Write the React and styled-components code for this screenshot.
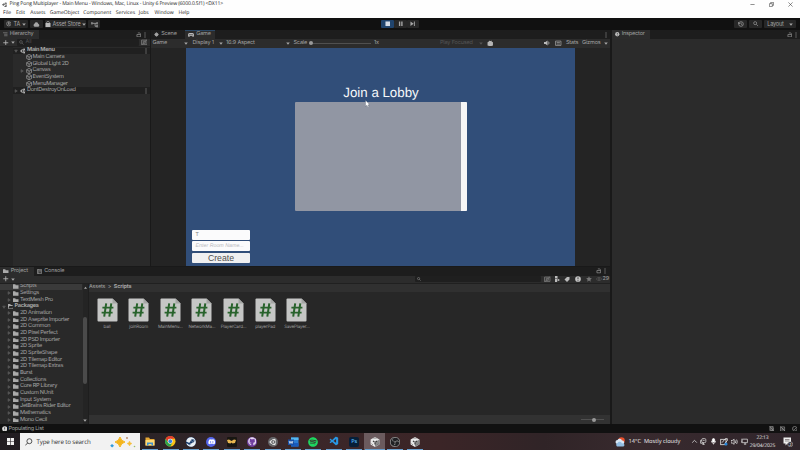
import React from "react";
import styled, { createGlobalStyle, css } from "styled-components";
import { FaSteam, FaDiscord, FaSpotify, FaGithub, FaUnity } from "react-icons/fa";
import { SiObsstudio } from "react-icons/si";
import { VscVscode } from "react-icons/vsc";

const GlobalStyle = createGlobalStyle`
  * { box-sizing: border-box; }
  body { margin: 0; background: #111; overflow: hidden; text-rendering: geometricPrecision; }
  svg { display: block; flex: none; }
`;

const Screen = styled.div`
  width: 800px;
  height: 450px;
  display: flex;
  flex-direction: column;
  overflow: hidden;
  font-family: Inter, sans-serif;
  font-size: 5.5px;
  letter-spacing: -0.16px;
  line-height: 1.2;
  color: #a2a2a2;
  white-space: nowrap;
`;

/* ---------- window chrome ---------- */
const WindowHeader = styled.header`
  height: 18px;
  flex: none;
  background: #fefefe;
  color: #222;
  font-family: "Open Sans", "Noto Sans", sans-serif;
  font-size: 5.1px;
  letter-spacing: 0;
`;
const TitleBar = styled.div`
  height: 9px;
  padding: 0 7px 0 2px;
  display: flex;
  align-items: center;
  gap: 2px;
`;
const WindowTitle = styled.span`
  flex: 1;
  font-size: 5.1px;
  letter-spacing: -0.14px;
`;
const WindowControls = styled.div`
  display: flex;
  gap: 14px;
`;
const MenuBar = styled.nav`
  height: 9px;
  padding-left: 3px;
  display: flex;
  align-items: center;
`;
const MenuItem = styled.span`
  width: ${(p) => p.$width}px;
`;

/* ---------- editor toolbar ---------- */
const Toolbar = styled.div`
  height: 12px;
  flex: none;
  display: flex;
  align-items: center;
  justify-content: space-between;
  background: #111;
  padding: 0 4px;
`;
const ToolGroup = styled.div`
  flex: 1;
  display: flex;
  gap: 2px;
  justify-content: ${(p) => p.$justify || "flex-start"};
`;
const ToolButton = styled.button`
  width: ${(p) => p.$width}px;
  height: 8px;
  padding: 0 2px;
  border: 0;
  border-radius: 1px;
  background: ${(p) => (p.$active ? "#20446d" : "#272727")};
  color: #a6a6a6;
  font: inherit;
  letter-spacing: inherit;
  display: flex;
  align-items: center;
  justify-content: center;
  gap: ${(p) => p.$gap || 1}px;
`;

/* ---------- panels ---------- */
const Workspace = styled.div`
  height: 394px;
  flex: none;
  display: grid;
  grid-template-columns: 610px 188px;
  gap: 2px;
  background: #191919;
`;
const MainArea = styled.div`
  display: grid;
  grid-template-rows: 235.5px 157.5px;
  row-gap: 1px;
`;
const UpperArea = styled.div`
  display: grid;
  grid-template-columns: 150px 459px;
  column-gap: 1px;
`;
const Panel = styled.section`
  display: flex;
  flex-direction: column;
  overflow: hidden;
  background: ${(p) => p.$bg || "#292929"};
`;
const TabBar = styled.div`
  height: 9px;
  flex: none;
  display: flex;
  background: #1d1d1d;
`;
const Tab = styled.div`
  width: ${(p) => p.$width}px;
  padding-left: 3px;
  display: flex;
  align-items: center;
  gap: 2.2px;
  color: #a0a0a0;
  ${(p) => p.$active && css`background: #2c2c2c;`}
  ${(p) => p.$focus && css`box-shadow: inset 0 0.8px #2b5179;`}
`;
const TabActions = styled.div`
  margin-left: auto;
  padding-right: ${(p) => p.$right ?? 3}px;
  display: flex;
  align-items: center;
  gap: 3px;
`;
const Strip = styled.div`
  height: ${(p) => p.$height || 8}px;
  flex: none;
  display: flex;
  align-items: center;
  gap: 2px;
  background: #2c2c2c;
  border-bottom: 1px solid #202020;
  padding: 0 ${(p) => p.$right ?? 3}px 0 3px;
`;
const SearchField = styled.div`
  width: ${(p) => p.$width}px;
  height: 6.4px;
  padding-left: 2px;
  display: flex;
  align-items: center;
  gap: 2px;
  border-radius: 1px;
  background: #1f1f1f;
  color: #4e4e4e;
`;

const TreeRow = styled.div`
  height: 6.67px;
  flex: none;
  display: flex;
  align-items: center;
  padding-left: ${(p) => p.$indent}px;
  font-size: 5.6px;
  letter-spacing: -0.3px;
  font-weight: ${(p) => (p.$bold ? 700 : 400)};
  color: #a6a6a6;
  background: ${(p) => (p.$selected ? "#3a3a3a" : p.$root ? "#202020" : "transparent")};
`;
const ArrowSlot = styled.span`
  width: 6px;
  flex: none;
  display: flex;
`;
const IconSlot = styled.span`
  width: ${(p) => p.$width || 7}px;
  flex: none;
  display: flex;
`;
const TreeEnd = styled.span`
  margin-left: auto;
  padding-right: 3.5px;
`;
const HierarchyBody = styled.div`
  flex: 1;
  display: grid;
  grid-template-columns: 13px 1fr;
  background: linear-gradient(90deg, #242424 13px, #2a2a2a 13px);
`;
const HierarchyRows = styled.div`
  grid-column: 2;
  padding-top: 0.5px;
`;

/* ---------- game view ---------- */
const GameStrip = styled.div`
  height: 8.5px;
  flex: none;
  display: flex;
  align-items: center;
  padding-left: 1.5px;
  background: #2c2c2c;
`;
const StripCell = styled.span`
  width: ${(p) => p.$width}px;
  flex: none;
  padding-right: ${(p) => p.$right || 0}px;
  display: flex;
  align-items: center;
  color: ${(p) => (p.$dim ? "#555" : "#a2a2a2")};
`;
const CellLabel = styled.span`
  flex: 1;
`;
const SliderTrack = styled.span`
  width: ${(p) => p.$width}px;
  height: 1px;
  background: #505050;
  display: flex;
  align-items: center;
  padding-left: ${(p) => p.$offset || 0}px;
`;
const SliderThumb = styled.i`
  width: 4px;
  height: 4px;
  flex: none;
  border-radius: 50%;
  background: #999;
`;
const Letterbox = styled.div`
  flex: 1;
  display: flex;
  padding: 0 35px;
  background: #242424;
`;
const GameCanvas = styled.div`
  flex: 1;
  position: relative;
  display: flex;
  flex-direction: column;
  padding-left: 6px;
  background: #314e79;
  font-family: "Liberation Sans", sans-serif;
  letter-spacing: 0;
`;
const LobbyTitle = styled.h1`
  width: 378px;
  height: 18px;
  margin: 36.5px 0 0;
  font-size: 13.3px;
  line-height: 18px;
  font-weight: 400;
  text-align: center;
  color: #f6f8fa;
`;
const LobbyList = styled.div`
  width: 172.5px;
  height: 109px;
  margin-left: 102.5px;
  border-radius: 1px;
  background: #9196a3;
  display: flex;
  justify-content: flex-end;
  overflow: hidden;
`;
const LobbyScrollbar = styled.div`
  width: 6.5px;
  background: #f6f6f6;
`;
const RoomForm = styled.div`
  width: 58px;
  margin-top: 19px;
  display: flex;
  flex-direction: column;
  gap: 1.3px;
`;
const RoomField = styled.div`
  height: 10.1px;
  padding-left: 3.5px;
  border-radius: 1px;
  background: #fbfbfc;
  color: ${(p) => (p.$placeholder ? "#b9b9be" : "#777")};
  font-size: 5.3px;
  font-style: ${(p) => (p.$placeholder ? "italic" : "normal")};
  line-height: 10.2px;
`;
const CreateButton = styled.button`
  height: 10.2px;
  padding: 0;
  border: 0;
  border-radius: 1px;
  background: #f0f0f1;
  color: #505050;
  font: 8.7px/10.5px "Liberation Sans", sans-serif;
`;
const Cursor = styled.svg`
  position: absolute;
  left: 178.5px;
  top: 52px;
`;

/* ---------- project panel ---------- */
const ProjectBody = styled.div`
  flex: 1;
  min-height: 0;
  display: grid;
  grid-template-columns: 82px 5px 522px;
  column-gap: 0.5px;
`;
const FolderTree = styled.div`
  overflow: hidden;
`;
const ScrollRail = styled.div`
  display: flex;
  flex-direction: column;
  align-items: center;
  padding: 2px 0;
  background: #242424;
`;
const ScrollThumb = styled.div`
  width: 4px;
  height: 67px;
  margin: 28px 0 auto;
  border-radius: 2px;
  background: #4b4b4b;
`;
const Browser = styled.div`
  display: flex;
  flex-direction: column;
  background: #272727;
  border-left: 1px solid #1e1e1e;
`;
const Breadcrumb = styled.div`
  height: 8px;
  flex: none;
  display: flex;
  align-items: center;
  gap: 2.6px;
  background: #303030;
  font-size: 5.4px;
`;
const FileGrid = styled.div`
  flex: 1;
  display: flex;
  padding: 6px 0 0 2.2px;
`;
const FileItem = styled.div`
  width: 31.65px;
  display: flex;
  flex-direction: column;
  align-items: center;
  gap: 3px;
  font-size: 4.5px;
  letter-spacing: -0.14px;
  color: #9c9c9c;
`;
const BrowserFooter = styled.div`
  height: 9px;
  display: flex;
  align-items: center;
  justify-content: flex-end;
  padding-right: 6px;
  background: #323232;
`;
const StatusBar = styled.footer`
  height: 9px;
  flex: none;
  display: flex;
  align-items: center;
  gap: 6px;
  padding: 0 3px 0 1.5px;
  background: #111;
`;
const StatusText = styled.span`
  flex: 1;
  margin-left: -4.5px;
  padding-top: 1px;
  letter-spacing: -0.22px;
`;

/* ---------- desktop taskbar ---------- */
const Taskbar = styled.div`
  height: 17px;
  flex: none;
  display: flex;
  align-items: stretch;
  background: linear-gradient(90deg, #211d21 0, #2a2327 18%, #3b2729 37%, #3b2527 55%, #302427 68%, #382a2e 80%, #30252b 100%);
  color: #eee;
  font-family: "Open Sans", "Noto Sans", sans-serif;
  letter-spacing: 0;
`;
const StartButton = styled.div`
  width: 20px;
  display: grid;
  place-items: center;
`;
const TaskSearch = styled.div`
  width: 120px;
  display: flex;
  align-items: center;
  gap: 4px;
  padding: 0 2px 0 5px;
  background: #f2f2f2;
  color: #333;
  font-size: 6.2px;
  letter-spacing: -0.15px;
`;
const SearchPrompt = styled.span`
  flex: 1;
  padding-top: 1px;
`;
const AppButton = styled.div`
  width: 20.42px;
  display: grid;
  place-items: center;
  background:
    linear-gradient(#69a3d2, #69a3d2) center bottom / ${(p) => (p.$active ? 20 : 16)}px 1px no-repeat,
    ${(p) => (p.$active ? "#6b5b5e" : "transparent")};
  color: ${(p) => p.$color || "#fff"};
`;
const AppBadge = styled.span`
  width: 10px;
  height: 10px;
  display: grid;
  place-items: center;
  border-radius: ${(p) => p.$radius || "50%"};
  background: ${(p) => p.$bg};
  font-size: 5.5px;
  font-weight: 600;
`;
const Weather = styled.div`
  margin-left: auto;
  width: 75.5px;
  display: flex;
  align-items: center;
  font-size: 5.7px;
`;
const WeatherIcon = styled.span`
  width: 13.5px;
`;
const Temperature = styled.span`
  width: 15.5px;
`;
const Tray = styled.div`
  width: 58.5px;
  display: flex;
  align-items: center;
  gap: 2.8px;
`;
const Clock = styled.div`
  width: 27px;
  padding-top: 0.5px;
  text-align: center;
  font-size: 5px;
  line-height: 8px;
  letter-spacing: -0.1px;
`;
const Notifications = styled.div`
  width: 24px;
  display: grid;
  place-items: center;
`;

/* ---------- drawings ---------- */
const Glyph = ({ size = 6, children, color = "#a6a6a6", filled }) => (
  <svg width={size} height={size} viewBox="0 0 12 12" fill={filled ? color : "none"} stroke={filled ? "none" : color} strokeWidth="1.3" color={color}>
    {children}
  </svg>
);
const Caret = ({ color = "#a6a6a6" }) => (
  <svg width="4" height="3" viewBox="0 0 4 3"><path d="M.2.5h3.600L2 2.700z" fill={color} /></svg>
);
const TreeArrow = ({ open }) => (
  <svg width="4" height="4" viewBox="0 0 4 4">
    <path d={open ? "M.6 1h2.8L2 3.4z" : "M1 .6v2.8L3.4 2z"} fill="#494949" stroke="#707070" strokeWidth=".4" />
  </svg>
);
const Kebab = () => (
  <svg width="2" height="6" viewBox="0 0 2 6" fill="#999"><rect x=".5" y=".5" width="1" height="1" /><rect x=".5" y="2.5" width="1" height="1" /><rect x=".5" y="4.5" width="1" height="1" /></svg>
);
const Lock = () => (
  <Glyph size={5.5}><path d="M2 5.5h8v5H2zM4 2h3.5a2 2 0 0 1 2 2v1.5" /></Glyph>
);
const Cube = () => (
  <Glyph size={6.2}><path d="M6 .8l4.7 2.5v5.4L6 11.2 1.3 8.7V3.3zM1.3 3.3L6 6l4.7-2.7M6 6v5.2" /></Glyph>
);
const Folder = ({ open }) => (
  <svg width="5.5" height="4.7" viewBox="0 0 12 10" fill="#aaa">
    {open ? <path d="M0 0h5l1 2h4v2H3L1 9h9l2-5v6H0z" /> : <path d="M0 .5h5l1 2h6V10H0z" />}
  </svg>
);
const Magnifier = ({ size = 5, color }) => (
  <Glyph size={size} color={color}><circle cx="4.7" cy="4.7" r="3.3" /><path d="M7.3 7.3l3.7 3.7" /></Glyph>
);
const Plus = () => (
  <Glyph size={5.5} color="#bbb"><path d="M6 .5v11M.5 6h11" strokeWidth="1.8" /></Glyph>
);
const Gear = () => (
  <Glyph size={5}><circle cx="6" cy="6" r="3.7" fill="currentColor" /><path d="M6 .5v11M.5 6h11M2.200 2.200l7.600 7.600M9.800 2.200l-7.600 7.600" /></Glyph>
);
const Info = ({ size = 5.5, color = "#c4c4c4" }) => (
  <Glyph size={size} color={color} filled><circle cx="6" cy="6" r="5.7" /><path d="M5.2 2.5h1.6v4H5.2zM5.2 7.8h1.6v1.6H5.2z" fill="#282828" /></Glyph>
);
const SavedSearch = () => (
  <Glyph size={6.5} color="#858585"><path d="M1 2h10v8H1zM1 11L11 1M4 4h4v4H4z" /></Glyph>
);
const ScriptFile = () => (
  <svg width="21" height="24" viewBox="0 0 21 25" preserveAspectRatio="none">
    <path d="M1.5.5h14l5 5.2v17.8q0 1-1 1h-18q-1 0-1-1v-22q0-1 1-1z" fill="#c5c6c5" />
    <path d="M15.5.5v5.2h5z" fill="#a4a5a4" />
    <path d="M9.2 5.7L7.2 19.5M14.3 5.7l-2 13.8M5.4 10h11M4.6 15.2h11" fill="none" stroke="#28632c" strokeWidth="2" />
  </svg>
);
const UnityMark = () => (
  <svg width="10" height="10" viewBox="0 0 20 20">
    <path d="M10 0l8.8 5v10L10 20 1.2 15V5z" fill="#e8e8e8" />
    <path d="M10 10l8.8-5v10L10 20z" fill="#8a8a8a" />
    <path d="M10 11v4M9 10L6 8M11 10l3-2" stroke="#3a3a3a" strokeWidth="2.4" fill="none" />
    <path d="M3 13l3 3M17 13l-3 3M7 3l3-1 3 1" stroke="#666" strokeWidth="1.2" fill="none" />
  </svg>
);
const Explorer = () => (
  <svg width="10" height="9" viewBox="0 0 20 18"><path d="M1 1h7l2 3h9v13H1z" fill="#e5a835" /><path d="M1 6h18v11H1z" fill="#ffda75" /><path d="M4 11h12v6h-3v-3H7v3H4z" fill="#3e91d0" /></svg>
);
const Chrome = () => (
  <svg width="10.5" height="10.5" viewBox="0 0 20 20">
    <circle cx="10" cy="10" r="10" fill="#fbc116" />
    <path d="M1.3 5A10 10 0 0 1 18.7 5H10a5 5 0 0 0-4.3 7.5z" fill="#e33b2e" />
    <path d="M1.3 5A10 10 0 0 0 10 20l4.3-7.5a5 5 0 0 1-8.6 0z" fill="#2da04d" />
    <circle cx="10" cy="10" r="4.6" fill="#fff" /><circle cx="10" cy="10" r="3.6" fill="#397fe3" />
  </svg>
);
const Word = () => (
  <svg width="11" height="10" viewBox="0 0 22 20"><path d="M6 1h15v18H6z" fill="#2b7cd3" /><path d="M6 1h15v5H6z" fill="#55b6ee" /><path d="M6 12h15v7H6z" fill="#185abd" /><path d="M0 5h12v11H0z" fill="#174fa5" /><path d="M2.3 8l1.6 5L6 8.5 8.1 13l1.6-5" stroke="#fff" strokeWidth="1.4" fill="none" /></svg>
);
const Sparkles = () => (
  <svg width="28" height="12" viewBox="0 0 28 12">
    <path d="M10 1q1 4 5 5-4 1-5 5-1-4-5-5 4-1 5-5z" fill="#f4b51d" stroke="#f4b51d" strokeWidth="1" strokeLinejoin="round" />
    <path d="M19.500 5q.5 2 2.500 2.500Q20 8 19.500 10q-.5-2-2.500-2.500Q19 7 19.500 5z" fill="#f5bd38" stroke="#f5bd38" strokeWidth=".4" />
    <path d="M2 8L4 9.800 2.100 11.500.2 9.800z" fill="#319bdc" />
    <circle cx="17" cy="2" r=".9" fill="#b98464" /><circle cx="24.500" cy="10.500" r=".8" fill="#9abc68" />
  </svg>
);

const menus = [["File", 13], ["Edit", 14.3], ["Assets", 19.4], ["GameObject", 33.5], ["Component", 32.6], ["Services", 23], ["Jobs", 15.7], ["Window", 24], ["Help", 15]];
const sceneObjects = [["Main Camera"], ["Global Light 2D"], ["Canvas", true], ["EventSystem"], ["MenuManager"]];
const packages = ["2D Animation", "2D Aseprite Importer", "2D Common", "2D Pixel Perfect", "2D PSD Importer", "2D Sprite", "2D SpriteShape", "2D Tilemap Editor", "2D Tilemap Extras", "Burst", "Collections", "Core RP Library", "Custom NUnit", "Input System", "JetBrains Rider Editor", "Mathematics", "Mono Cecil"];
const scripts = ["ball", "joinRoom", "MainMenu...", "NetworkMa...", "PlayerCard...", "playerPad", "SavePlayer..."];

const FolderRow = ({ name, arrow = true }) => (
  <TreeRow $indent={7.3} $selected={!arrow}>
    <ArrowSlot>{arrow && <TreeArrow />}</ArrowSlot>
    <IconSlot $width={6.7}><Folder /></IconSlot>
    {name}
  </TreeRow>
);

function Hierarchy() {
  return (
    <Panel>
      <TabBar>
        <Tab $width={39} $active><Glyph size={4.5}><path d="M0 2h12M3 6h9M3 10h9" /></Glyph>Hierarchy</Tab>
        <TabActions $right={4}><Lock /><Kebab /></TabActions>
      </TabBar>
      <Strip>
        <Plus /><Caret />
        <SearchField $width={123}><Magnifier color="#777" />All</SearchField>
        <SavedSearch />
      </Strip>
      <HierarchyBody>
        <HierarchyRows>
          <TreeRow $indent={1} $bold $root>
            <ArrowSlot><TreeArrow open /></ArrowSlot><IconSlot><FaUnity size={6} color="#ddd" /></IconSlot>Main Menu<TreeEnd><Kebab /></TreeEnd>
          </TreeRow>
          {sceneObjects.map(([name, arrow]) => (
            <TreeRow key={name} $indent={6.500}>
              <ArrowSlot>{arrow && <TreeArrow />}</ArrowSlot><IconSlot><Cube /></IconSlot>{name}
            </TreeRow>
          ))}
          <TreeRow $indent={1} $root>
            <ArrowSlot><TreeArrow /></ArrowSlot><IconSlot><FaUnity size={6} color="#ddd" /></IconSlot>DontDestroyOnLoad<TreeEnd><Kebab /></TreeEnd>
          </TreeRow>
        </HierarchyRows>
      </HierarchyBody>
    </Panel>
  );
}

function GameView() {
  return (
    <Panel>
      <TabBar>
        <Tab $width={34}><Gear />Scene</Tab>
        <Tab $width={29.5} $active $focus>
          <svg width="6" height="4" viewBox="0 0 12 8"><path d="M3 0h6q3 0 3 4t-2 4L8 6H4L2 8Q0 8 0 4t3-4z" fill="#bbb" /><circle cx="4" cy="3.500" r="1.300" fill="#333" /><circle cx="8" cy="3.500" r="1.300" fill="#333" /></svg>
          Game
        </Tab>
        <TabActions><Kebab /></TabActions>
      </TabBar>
      <GameStrip>
        <StripCell $width={40} $right={5}><CellLabel>Game</CellLabel><Caret /></StripCell>
        <StripCell $width={33.5} $right={3.5}><CellLabel>Display 1</CellLabel><Caret /></StripCell>
        <StripCell $width={67.5} $right={4}><CellLabel>16:9 Aspect</CellLabel><Caret /></StripCell>
        <StripCell $width={15.5}>Scale</StripCell>
        <StripCell $width={65}><SliderTrack $width={62}><SliderThumb /></SliderTrack></StripCell>
        <StripCell $width={66}>1x</StripCell>
        <StripCell $width={47} $dim $right={4}><CellLabel>Play Focused</CellLabel><Caret color="#555" /></StripCell>
        <StripCell $width={57}><Glyph size={6.5} filled color="#b5b5b5"><path d="M4 1l1 1h2l1-1 1 2 2 1v6l-3 1H4L1 10V4l2-1z" /></Glyph></StripCell>
        <StripCell $width={11}><Glyph size={6} filled color="#bbb"><path d="M0 4h3l4-3v10L3 8H0zM8.500 3v6h1V3zM10.500 5v2h1V5z" /></Glyph></StripCell>
        <StripCell $width={11}><Glyph size={6.500}><path d="M1 2h10v8H1zM3 4.500h6M3 7.500h6" /></Glyph></StripCell>
        <StripCell $width={16}>Stats</StripCell>
        <StripCell $width={26}><CellLabel>Gizmos</CellLabel><Caret /></StripCell>
      </GameStrip>
      <Letterbox>
        <GameCanvas>
          <LobbyTitle>Join a Lobby</LobbyTitle>
          <LobbyList><LobbyScrollbar /></LobbyList>
          <RoomForm>
            <RoomField>T</RoomField>
            <RoomField $placeholder>Enter Room Name...</RoomField>
            <CreateButton>Create</CreateButton>
          </RoomForm>
          <Cursor width="5.5" height="7.7" viewBox="0 0 5 7"><path d="M.5.3v5.500l1.300-1.100.8 1.900.9-.4-.8-1.800h1.600z" fill="#fff" stroke="#2b3544" strokeWidth=".2" /></Cursor>
        </GameCanvas>
      </Letterbox>
    </Panel>
  );
}

function Project() {
  return (
    <Panel>
      <TabBar>
        <Tab $width={34} $active><Folder />Project</Tab>
        <Tab $width={40}><Glyph size={5} color="#bbb"><path d="M1 1h10v10H1zM3 1v10M5 4h5M5 7h5" /></Glyph>Console</Tab>
        <TabActions $right={4}><Lock /><Kebab /></TabActions>
      </TabBar>
      <Strip $right={0.5}>
        <Plus /><Caret />
        <TabActions $right={0}>
          <SearchField $width={126}><Magnifier size={4} color="#b0b0b0" /></SearchField>
          <SavedSearch />
          <IconSlot $width={7.5}><Glyph size={6} filled color="#bbb"><path d="M2 0h5v5H2zM2 6h4v6H2zM7 5l5 3-5 3z" /></Glyph></IconSlot>
          <IconSlot $width={7.7}><Glyph size={6} filled color="#bbb"><path d="M1 7l5-5h5v5l-5 5z" /></Glyph></IconSlot>
          <IconSlot $width={8}><Info size={6} /></IconSlot>
          <IconSlot $width={6.7}><Glyph size={6} filled color="#777"><path d="M6 .5l1.700 3.700 4 .4-3 2.700.9 4L6 9.200l-3.600 2.100.9-4-3-2.700 4-.4z" /></Glyph></IconSlot>
          <IconSlot $width={4}><Glyph size={6} color="#5a5a5a"><path d="M.5 6Q6-.5 11.500 6 6 12.500.5 6z" /><circle cx="6" cy="6" r="1.500" /></Glyph></IconSlot>
          <StripCell $width={7}>29</StripCell>
        </TabActions>
      </Strip>
      <ProjectBody>
        <FolderTree>
          <FolderRow name="Scripts" arrow={false} />
          <FolderRow name="Settings" />
          <FolderRow name="TextMesh Pro" />
          <TreeRow $indent={1.5} $bold><ArrowSlot><TreeArrow open /></ArrowSlot><IconSlot><Folder open /></IconSlot>Packages</TreeRow>
          {packages.map((name) => <FolderRow key={name} name={name} />)}
        </FolderTree>
        <ScrollRail>
          <svg width="3" height="3" viewBox="0 0 4 3"><path d="M0 3h4L2 .5z" fill="#aaa" /></svg>
          <ScrollThumb />
          <Caret />
        </ScrollRail>
        <Browser>
          <Breadcrumb><span>Assets</span><span>&gt;</span><b>Scripts</b></Breadcrumb>
          <FileGrid>
            {scripts.map((name) => <FileItem key={name}><ScriptFile />{name}</FileItem>)}
          </FileGrid>
          <BrowserFooter><SliderTrack $width={23} $offset={10.5}><SliderThumb /></SliderTrack></BrowserFooter>
        </Browser>
      </ProjectBody>
    </Panel>
  );
}

function DesktopTaskbar() {
  return (
    <Taskbar>
      <StartButton><svg width="7" height="7" viewBox="0 0 7 7" fill="#f2f2f2"><path d="M0 0h3.200v3.200H0zM3.800 0H7v3.200H3.800zM0 3.800h3.200V7H0zM3.800 3.800H7V7H3.800z" /></svg></StartButton>
      <TaskSearch>
        <svg width="7.500" height="8" viewBox="0 0 12 12" fill="none" stroke="#333" strokeWidth="1.300"><circle cx="7" cy="4.700" r="4" /><path d="M4.200 7.500L.5 11.500" /></svg>
        <SearchPrompt>Type here to search</SearchPrompt><Sparkles />
      </TaskSearch>
      <AppButton><Explorer /></AppButton>
      <AppButton><Chrome /></AppButton>
      <AppButton><AppBadge $bg="#14396b"><FaSteam size={10} color="#eaf0f5" /></AppBadge></AppButton>
      <AppButton><AppBadge $bg="#5465e9"><FaDiscord size={7.5} /></AppBadge></AppButton>
      <AppButton><AppBadge $bg="#181612" $radius="1px"><svg width="9" height="6" viewBox="0 0 9 6"><path d="M0 1l2-.5L4.500 2 7 .5 9 1 8 4 5.500 4.500 4.500 3.500 3.500 4.500 1 4z" fill="#e9b64f" /></svg></AppBadge></AppButton>
      <AppButton><AppBadge $bg="#7040a0"><FaGithub size={8.5} color="#e5d7ef" /></AppBadge></AppButton>
      <AppButton><AppBadge $bg="#656568"><FaUnity size={8} color="#eee" /></AppBadge></AppButton>
      <AppButton><Word /></AppButton>
      <AppButton $color="#1ed760"><FaSpotify size={10} /></AppButton>
      <AppButton $color="#2997e2"><VscVscode size={10.5} /></AppButton>
      <AppButton $color="#54b5f5"><AppBadge $bg="#071f38" $radius="2px">Ps</AppBadge></AppButton>
      <AppButton $active><UnityMark /></AppButton>
      <AppButton $color="#c8c8c8"><AppBadge $bg="#202023"><SiObsstudio size={10} /></AppBadge></AppButton>
      <AppButton><UnityMark /></AppButton>
      <Weather>
        <WeatherIcon><svg width="11" height="10" viewBox="0 0 22 20"><circle cx="13" cy="7" r="6.500" fill="#e7502c" /><path d="M5 14a4 4 0 0 1 0-8 5 5 0 0 1 9 1 4 4 0 0 1 3 7z" fill="#d9e8f5" /><path d="M4 19a4 4 0 0 1 1-7 5 5 0 0 1 9 1 3 3 0 0 1 3 6z" fill="#92bde3" /></svg></WeatherIcon>
        <Temperature>14°C</Temperature>Mostly cloudy
      </Weather>
      <Tray>
        <Glyph size={7} color="#ddd"><path d="M2 8l4-4 4 4" /></Glyph>
        <Glyph size={7} color="#ddd"><rect x="3" y="1" width="7" height="7" rx="2" /><path d="M3 4H1v5h5M6 8v3M4 11h4M5 4h3" /></Glyph>
        <Glyph size={7} color="#fff"><rect x="4" y="1" width="4" height="6" rx="2" fill="#fff" /><path d="M2.500 5q0 4 3.500 4t3.500-4M6 9v2" /></Glyph>
        <Glyph size={8} color="#ddd"><rect x="1" y="2" width="8" height="8" /><path d="M3 7l5-6h3v3L7 8" /><circle cx="9" cy="9" r="2.300" fill="#2584d8" stroke="none" /></Glyph>
        <Glyph size={7.500} color="#ddd"><path d="M0 4h2l3-2v8L2 8H0zM7 4q1 2 0 4M9 2.500q2 3.500 0 7" /></Glyph>
        <Glyph size={7} color="#ddd"><path d="M2 2h9v6H2zM5 10.500h4M7 8v3M0 1v6h2" /></Glyph>
      </Tray>
      <Clock>22:13<br />29/04/2025</Clock>
      <Notifications>
        <svg width="10" height="10" viewBox="0 0 20 20"><path d="M1 1h15v12H9l-4 4v-4H1z" fill="#eee" /><path d="M4 5h9M4 8h9" stroke="#554a4d" strokeWidth="1.200" /><circle cx="14.500" cy="14.500" r="5" fill="#302830" stroke="#ccc" strokeWidth="1" /><text x="12.500" y="17.500" fontSize="8" fill="#fff">2</text></svg>
      </Notifications>
    </Taskbar>
  );
}

export default function App() {
  return (
    <Screen>
      <GlobalStyle />
      <WindowHeader>
        <TitleBar>
          <FaUnity size={5.5} color="#222" />
          <WindowTitle>Ping Pong Multiplayer - Main Menu - Windows, Mac, Linux - Unity 6 Preview (6000.0.5f1) &lt;DX11&gt;</WindowTitle>
          <WindowControls>
            <Glyph size={5} color="#333"><path d="M1 6h10" /></Glyph>
            <Glyph size={5} color="#333"><path d="M1 4h7v7H1zM4 4V1h7v7H8" /></Glyph>
            <Glyph size={5} color="#333"><path d="M1 1l10 10M11 1L1 11" /></Glyph>
          </WindowControls>
        </TitleBar>
        <MenuBar>{menus.map(([name, width]) => <MenuItem key={name} $width={width}>{name}</MenuItem>)}</MenuBar>
      </WindowHeader>
      <Toolbar>
        <ToolGroup>
          <ToolButton $width={24} $gap={2}><Glyph size={5.5}><circle cx="6" cy="6" r="4.800" /><circle cx="6" cy="4.500" r="1.500" fill="currentColor" /><path d="M3 9q3-3 6 0" /></Glyph>TA <Caret /></ToolButton>
          <ToolButton $width={13}><Glyph size={7} filled><path d="M3 10a3 3 0 0 1-.5-5.500 3.500 3.500 0 0 1 6.500 0A3 3 0 0 1 9 10z" /></Glyph></ToolButton>
          <ToolButton $width={41}><Glyph size={6} filled color="#bbb"><path d="M1 4h2V2q3-3 6 0v2h2v8H1zM4 4h4V2.500q-2-1.500-4 0z" /></Glyph>Asset Store <Caret /></ToolButton>
          <ToolButton $width={12}><Glyph size={7}><path d="M0 3h3v2H0zM3 4h4v5h2M9 3h3v2H9zM9 8h3v2H9zM7 4h2" /></Glyph></ToolButton>
        </ToolGroup>
        <ToolButton $width={13} $active><Glyph size={5.5} filled color="#d5dde7"><path d="M1 1h10v10H1z" /></Glyph></ToolButton>
        <ToolButton $width={13}><Glyph size={5.5} filled><path d="M2 1h3v10H2zM7 1h3v10H7z" /></Glyph></ToolButton>
        <ToolButton $width={12}><Glyph size={5.5} filled><path d="M1 1l7 5-7 5zM8.500 1h2v10h-2z" /></Glyph></ToolButton>
        <ToolGroup $justify="flex-end">
          <ToolButton $width={13}><Glyph size={6}><circle cx="6" cy="6" r="4.700" /><path d="M1 2v3h3M6 3v3l3 2" /></Glyph></ToolButton>
          <ToolButton $width={13}><Magnifier size={5.500} color="#aaa" /></ToolButton>
          <ToolButton $width={32} $gap={5}>Layout <Caret /></ToolButton>
        </ToolGroup>
      </Toolbar>
      <Workspace>
        <MainArea>
          <UpperArea><Hierarchy /><GameView /></UpperArea>
          <Project />
        </MainArea>
        <Panel $bg="#2b2b2b">
          <TabBar><Tab $width={38} $active><Info size={4.500} color="#bbb" />Inspector</Tab><TabActions><Lock /><Kebab /></TabActions></TabBar>
        </Panel>
      </Workspace>
      <StatusBar>
        <Info size={5.500} color="#ddd" /><StatusText>Populating List</StatusText>
        <Glyph size={5.500}><path d="M2 1h7v9H2zM1 1l10 10M4 4h5v5H4z" /></Glyph>
        <Glyph size={5.500}><path d="M1 2h9v9H1zM3 5h5M3 8h5M1 1l10 10" /></Glyph>
        <Glyph size={5.500}><circle cx="6" cy="6" r="5" /><path d="M3 6l2 2 4-4" /></Glyph>
      </StatusBar>
      <DesktopTaskbar />
    </Screen>
  );
}
